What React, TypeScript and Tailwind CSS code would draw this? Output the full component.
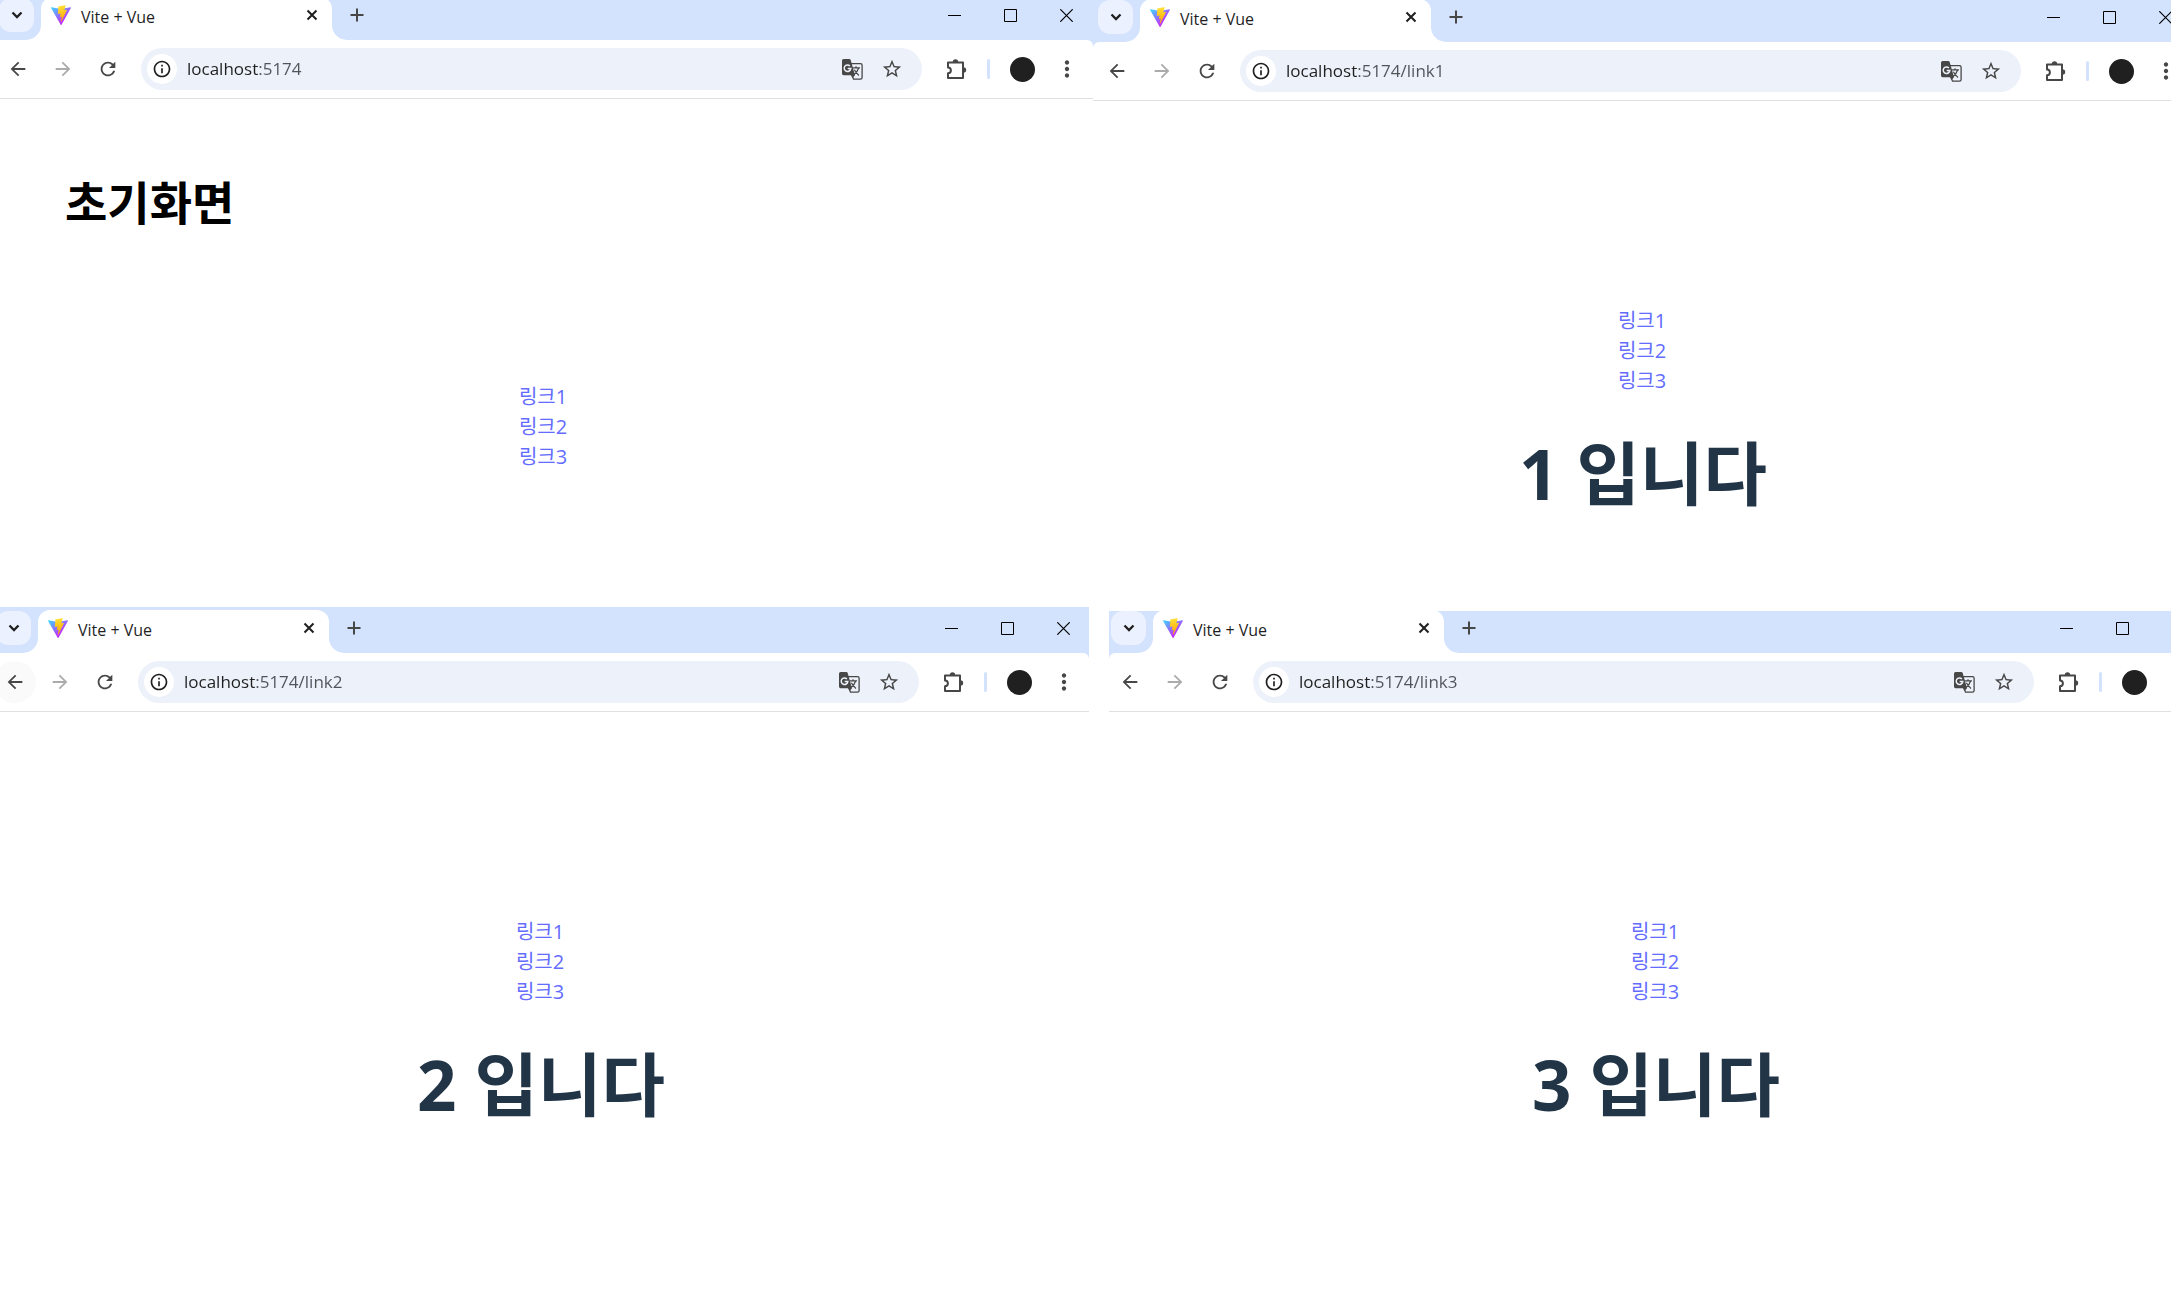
import { useId } from 'react'
import type { ReactNode } from 'react'
import clsx from 'clsx'
import {
  MdArrowBack,
  MdArrowForward,
  MdInfoOutline,
  MdMoreVert,
  MdRefresh,
  MdStarOutline
} from 'react-icons/md'

const links = ['링크1', '링크2', '링크3']

function ViteLogo() {
  const id = useId()
  return (
    <svg viewBox="0 0 256 257" className="size-5 shrink-0" aria-hidden="true">
      <defs>
        <linearGradient id={`${id}-a`} x1="-.828%" x2="57.636%" y1="7.652%" y2="78.411%">
          <stop offset="0%" stopColor="#41D1FF" />
          <stop offset="100%" stopColor="#BD34FE" />
        </linearGradient>
        <linearGradient id={`${id}-b`} x1="43.376%" x2="50.316%" y1="2.242%" y2="89.03%">
          <stop offset="0%" stopColor="#FFEA83" />
          <stop offset="8.333%" stopColor="#FFDD35" />
          <stop offset="100%" stopColor="#FFA800" />
        </linearGradient>
      </defs>
      <path
        fill={`url(#${id}-a)`}
        d="M255.153 37.938L134.897 252.976c-2.483 4.44-8.862 4.466-11.382.048L.875 37.958c-2.746-4.814 1.371-10.646 6.827-9.67l120.385 21.517a6.537 6.537 0 0 0 2.322-.004l117.867-21.483c5.438-.991 9.574 4.796 6.877 9.62Z"
      />
      <path
        fill={`url(#${id}-b)`}
        d="M185.432.063L96.44 17.501a3.268 3.268 0 0 0-2.634 3.014l-5.474 92.456a3.268 3.268 0 0 0 3.997 3.378l24.777-5.718c2.318-.535 4.413 1.507 3.936 3.838l-7.361 36.047c-.495 2.426 1.782 4.5 4.151 3.78l15.304-4.649c2.372-.72 4.652 1.36 4.15 3.788l-11.698 56.621c-.732 3.542 3.979 5.473 5.943 2.437l1.313-2.028l72.516-144.72c1.215-2.423-.88-5.186-3.54-4.672l-25.505 4.922c-2.396.462-4.435-1.77-3.759-4.114l16.646-57.705c.677-2.35-1.37-4.583-3.769-4.113Z"
      />
    </svg>
  )
}

function PuzzleIcon() {
  return (
    <svg viewBox="0 0 22 22" className="size-[22px]" fill="none" aria-hidden="true">
      <path
        d="M3 4.5h15v15.5H3v-4.8a2.9 2.9 0 0 0 0-5.8z"
        stroke="currentColor"
        strokeWidth="2"
        strokeLinejoin="round"
      />
      <path d="M7.800 4a2.700 2.700 0 0 1 5.400 0zM18.500 9.300a2.700 2.700 0 0 1 0 5.400z" fill="currentColor" />
    </svg>
  )
}

// Filled card in front, outlined page behind it
function TranslateIcon() {
  return (
    <svg viewBox="0 0 21 21" className="size-[21px]" fill="none" aria-hidden="true">
      <path
        d="M9 4.700h9.500a1.600 1.600 0 0 1 1.600 1.600v12.200a1.600 1.600 0 0 1-1.600 1.600h-7L10 16"
        stroke="currentColor"
        strokeWidth="1.300"
      />
      <path
        d="M10.500 8.900h7.500M14 7.300v1.600M16.600 9c-.8 3-2.400 5-5 7M12.400 10.800c1 2.300 2.600 4.200 4.600 5.600"
        stroke="currentColor"
        strokeWidth="1.200"
      />
      <path
        d="M1.600 0h5.700c.7 0 1.200.4 1.400 1l4.300 15.200H1.600A1.600 1.600 0 0 1 0 14.600v-13A1.600 1.600 0 0 1 1.600 0zM9 16.200h4L10.500 19z"
        fill="currentColor"
      />
      <path d="M7.900 6.900a3.300 3.300 0 1 0 .9 2.700H5.700" stroke="#ecf1fa" strokeWidth="1.500" />
    </svg>
  )
}

// Concave corner between the active tab and the toolbar
function TabFoot({ side }: { side: 'left' | 'right' }) {
  return (
    <svg
      viewBox="0 0 15 15"
      className={clsx('absolute bottom-0 size-[15px] text-white', side === 'left' ? 'right-full' : 'left-full')}
      aria-hidden="true"
    >
      <path d={side === 'left' ? 'M15 0v15H0A15 15 0 0 0 15 0z' : 'M0 0v15h15A15 15 0 0 1 0 0z'} fill="currentColor" />
    </svg>
  )
}

function TabStrip({ className }: { className: string }) {
  return (
    <div className={clsx('flex items-end', className)}>
      <button
        aria-label="Search tabs"
        className="mb-2 flex h-[34px] w-[35px] items-center justify-center rounded-xl bg-[#ebf1fe] text-[#1f1f1f]"
      >
        <svg viewBox="0 0 12 12" className="size-3" fill="none" stroke="currentColor" strokeWidth="2.3" aria-hidden="true">
          <path d="M1.500 3.500 6 8l4.500-4.500" />
        </svg>
      </button>

      <div className="relative ml-[7px] flex h-[43px] w-[291px] items-end rounded-t-xl bg-white px-2.5 pb-2">
        <TabFoot side="left" />
        <div className="flex h-[34px] flex-1 items-center gap-2.5">
          <ViteLogo />
          <span className="flex-1 pt-1 text-[16px] leading-5 text-[#1f1f1f]">Vite + Vue</span>
          <button aria-label="Close tab" className="flex size-5 items-center justify-center text-[#1f1f1f]">
            <svg viewBox="0 0 12 12" className="size-3" stroke="currentColor" strokeWidth="2" aria-hidden="true">
              <path d="M1.500 1.500l9 9M10.500 1.500l-9 9" />
            </svg>
          </button>
        </div>
        <TabFoot side="right" />
      </div>

      <button
        aria-label="New tab"
        className="mb-2 ml-2.5 flex h-[34px] w-[30px] items-center justify-center text-[#474747]"
      >
        <svg viewBox="0 0 14 14" className="size-3.5" stroke="currentColor" strokeWidth="2" aria-hidden="true">
          <path d="M7 .5v13M.5 7h13" />
        </svg>
      </button>

      <div className="-mr-px mb-2 ml-auto flex text-black">
        <button aria-label="Minimize" className="flex h-[34px] w-14 items-center justify-center">
          <svg viewBox="0 0 13 13" className="size-[13px]" stroke="currentColor" aria-hidden="true">
            <path d="M0 6.500h13" />
          </svg>
        </button>
        <button aria-label="Maximize" className="flex h-[34px] w-14 items-center justify-center">
          <svg viewBox="0 0 13 13" className="size-[13px]" fill="none" stroke="currentColor" aria-hidden="true">
            <path d="M.5.5h12v12H.5z" />
          </svg>
        </button>
        <button aria-label="Close" className="flex h-[34px] w-14 items-center justify-center">
          <svg viewBox="0 0 13 13" className="size-[13px]" stroke="currentColor" strokeWidth="1.2" aria-hidden="true">
            <path d="M.3.3l12.400 12.400M12.700.3L.3 12.700" />
          </svg>
        </button>
      </div>
    </div>
  )
}

function ToolButton({ label, className, children }: { label: string; className?: string; children: ReactNode }) {
  return (
    <button
      aria-label={label}
      className={clsx('flex size-[42px] shrink-0 items-center justify-center rounded-full', className)}
    >
      {children}
    </button>
  )
}

function Toolbar({ url, backActive }: { url: string; backActive?: boolean }) {
  return (
    <div className="flex h-[58px] items-center pr-[5px] text-[#474747]">
      <div className="-ml-0.5 flex gap-[3px]">
        <ToolButton label="Back" className={backActive ? 'bg-[#fafafa]' : ''}>
          <MdArrowBack className="size-[22px]" />
        </ToolButton>
        <ToolButton label="Forward" className="text-[#ababab]">
          <MdArrowForward className="size-[22px]" />
        </ToolButton>
        <ToolButton label="Reload">
          <MdRefresh className="size-[22px]" />
        </ToolButton>
      </div>

      <div className="ml-3 flex h-[42px] flex-1 items-center rounded-full bg-[#ecf1fa] pr-2.5 pl-1.5">
        <button
          aria-label="Site information"
          className="flex size-[30px] items-center justify-center rounded-full bg-white text-[#1f1f1f]"
        >
          <MdInfoOutline className="size-5" />
        </button>
        {/* host is darker than the port and path */}
        <input
          type="text"
          aria-label="Address"
          defaultValue={url}
          className="ml-2.5 min-w-0 flex-1 bg-[linear-gradient(90deg,#1f1f1f_71px,#505357_71px)] bg-clip-text text-[17px] leading-6 text-transparent outline-none"
        />
        <button aria-label="Translate this page" className="flex size-10 items-center justify-center">
          <TranslateIcon />
        </button>
        <button aria-label="Bookmark" className="flex size-10 items-center justify-center">
          <MdStarOutline className="size-[22px]" />
        </button>
      </div>

      <ToolButton label="Extensions" className="ml-[13px]">
        <PuzzleIcon />
      </ToolButton>
      <div className="ml-2.5 h-5 w-[3px] rounded-full bg-[#d3e3fd]" />
      <button aria-label="Profile" className="ml-5 size-[25px] shrink-0 rounded-full bg-[#202020]" />
      <ToolButton label="Menu" className="ml-[11px]">
        <MdMoreVert className="size-[26px]" />
      </ToolButton>
    </div>
  )
}

type BrowserProps = {
  url: string
  className: string
  frame: string
  strip: string
  corners?: string
  backActive?: boolean
  children: ReactNode
}

function Browser({ url, className, frame, strip, corners, backActive, children }: BrowserProps) {
  return (
    <section className={clsx('min-w-0 basis-0 overflow-hidden bg-white', className)}>
      <div className="bg-[#d3e3fd]">
        <div className={frame}>
          <TabStrip className={strip} />
        </div>
        <div className={clsx('overflow-hidden border-b border-[#dfe0e2] bg-white', corners)}>
          <div className={frame}>
            <Toolbar url={url} backActive={backActive} />
          </div>
        </div>
      </div>
      <div className={frame}>{children}</div>
    </section>
  )
}

function LinkList() {
  return (
    <nav className="flex flex-col items-center pr-1.5 text-[20px] leading-[30px] text-[#646cff]">
      {links.map((link, i) => (
        <a key={link} href={`#link${i + 1}`}>
          {link}
        </a>
      ))}
    </nav>
  )
}

function LinkPage({ title }: { title: string }) {
  return (
    <main className="pt-[205px]">
      <LinkList />
      <h1 className="mt-[42px] pr-1 text-center text-[69px] leading-[70px] font-bold text-[#213547]">{title}</h1>
    </main>
  )
}

export default function App() {
  return (
    <div className="grid min-h-screen grid-rows-[607fr_694fr] overflow-hidden bg-white font-['Open_Sans','Noto_Sans_CJK_KR',sans-serif]">
      <div className="flex">
        <Browser
          url="localhost:5174"
          className="grow-[1093]"
          frame="-ml-px"
          strip="h-10"
          corners="rounded-tr-md"
        >
          <main>
            <h1 className="pt-[73px] pl-[66px] text-[46px] leading-[60px] font-bold text-black">초기화면</h1>
            <div className="mt-[150px]">
              <LinkList />
            </div>
          </main>
        </Browser>
        <Browser
          url="localhost:5174/link1"
          className="grow-[1078]"
          frame="ml-[5px] -mr-[21px]"
          strip="h-[42px]"
          corners="rounded-tl-md"
        >
          <LinkPage title="1 입니다" />
        </Browser>
      </div>

      <div className="flex gap-5">
        <Browser
          url="localhost:5174/link2"
          className="grow-[1089]"
          frame="-mr-px -ml-1"
          strip="h-[46px]"
          corners="rounded-tr-md"
          backActive
        >
          <LinkPage title="2 입니다" />
        </Browser>
        <Browser
          url="localhost:5174/link3"
          className="mt-1 grow-[1062]"
          frame="ml-0.5 -mr-[34px]"
          strip="h-[42px]"
          corners="rounded-tl-md"
        >
          <LinkPage title="3 입니다" />
        </Browser>
      </div>
    </div>
  )
}
